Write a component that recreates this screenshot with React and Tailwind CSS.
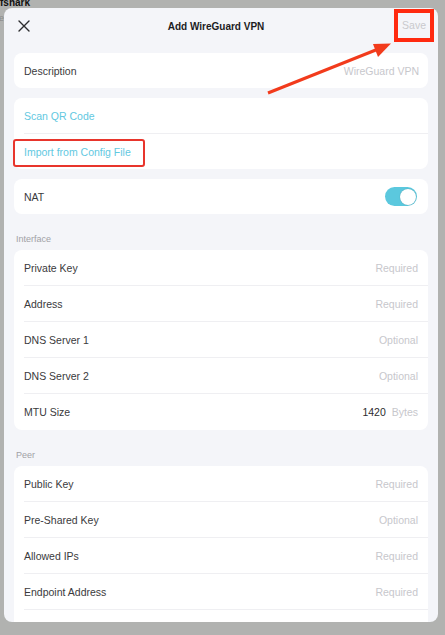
import React from "react";

const font = { fontFamily: '"Liberation Sans", Arial, sans-serif' };

function Row({ label, value, valueDark, last }) {
  return (
    <div
      className={`h-[36px] flex items-center justify-between pr-[10px] ${
        last ? "" : "border-b border-[#efeff2]"
      }`}
    >
      <span className="mt-[2px] text-[10.5px] text-[#3a3a3c]">{label}</span>
      <span className="mt-[2px] text-[10.5px] text-[#c7c7cc] flex items-center gap-[6px]">
        {valueDark && <span className="text-[#2c2c2e]">{valueDark}</span>}
        {value}
      </span>
    </div>
  );
}

function Section({ title }) {
  return (
    <div className="pt-[20px] pb-[5px] pl-[2px] text-[9px] leading-[11px] text-[#a1a1a6]">
      {title}
    </div>
  );
}

export default function App() {
  return (
    <div
      className="relative w-[445px] h-[635px] bg-[#b1b2b0] overflow-hidden pt-[8px] pl-[4px]"
      style={font}
    >
      <div className="absolute left-0 top-[-3px] text-[10px] font-bold text-[#111] leading-[11px]">
        fshark
      </div>
      <div className="absolute left-[-1px] top-[13px] text-[9px] text-[#8a8a8a] leading-[10px]">
        e
      </div>

      <div className="relative w-[434px] h-[614px] rounded-[8px] bg-[#f4f5f9] overflow-hidden flex flex-col">
        <div className="h-[36px] shrink-0 flex items-center justify-between pl-[14px] pr-[12px]">
          <svg width="12" height="12" viewBox="0 0 12 12">
            <path d="M1 1 L11 11 M11 1 L1 11" stroke="#2c2c2e" strokeWidth="1.4" strokeLinecap="round" />
          </svg>
          <span className="text-[10px] font-bold text-[#1c1c1e]">Add WireGuard VPN</span>
          <span className="text-[10.5px] text-[#c9c9cd]">Save</span>
        </div>

        <div className="mt-[9px] px-[10px] flex flex-col">
          <div className="bg-white rounded-[8px] h-[35px] flex items-center justify-between pl-[10px] pr-[9px]">
            <span className="mt-[2px] text-[10.5px] text-[#3a3a3c]">Description</span>
            <span className="mt-[2px] text-[10.5px] text-[#c7c7cc]">WireGuard VPN</span>
          </div>

          <div className="mt-[10px] bg-white rounded-[8px] pl-[10px]">
            <div className="h-[36px] flex items-center border-b border-[#efeff2] text-[10.5px] text-[#62c8df]">
              <span className="mt-[2px]">Scan QR Code</span>
            </div>
            <div className="h-[35px] flex items-center text-[10.5px] text-[#62c8df]">
              <span className="mt-[2px]">Import from Config File</span>
            </div>
          </div>

          <div className="mt-[10px] bg-white rounded-[8px] h-[35px] flex items-center justify-between pl-[10px] pr-[11px]">
            <span className="mt-[2px] text-[10.5px] text-[#3a3a3c]">NAT</span>
            <div className="w-[32px] h-[19px] rounded-full bg-[#5bc8de] flex items-center justify-end pr-[1.5px]">
              <div className="w-[16px] h-[16px] rounded-full bg-white shadow-[0_0_1px_rgba(0,0,0,0.3)]" />
            </div>
          </div>

          <Section title="Interface" />
          <div className="bg-white rounded-[8px] pl-[10px]">
            <Row label="Private Key" value="Required" />
            <Row label="Address" value="Required" />
            <Row label="DNS Server 1" value="Optional" />
            <Row label="DNS Server 2" value="Optional" />
            <Row label="MTU Size" valueDark="1420" value="Bytes" last />
          </div>

          <Section title="Peer" />
          <div className="bg-white rounded-[8px] pl-[10px]">
            <Row label="Public Key" value="Required" />
            <Row label="Pre-Shared Key" value="Optional" />
            <Row label="Allowed IPs" value="Required" />
            <Row label="Endpoint Address" value="Required" />
            <div className="h-[36px] flex items-start justify-between pr-[10px] pt-[10px]">
              <span className="text-[10.5px] text-[#3a3a3c]">Endpoint Port</span>
              <span className="text-[10.5px] text-[#c7c7cc]">Required</span>
            </div>
          </div>
        </div>
      </div>

      {/* annotations */}
      <div className="absolute left-[394px] top-[9px] w-[40px] h-[33px] border-[4px] border-[#ff2a10]" />
      <div className="absolute left-[13px] top-[139px] w-[132px] h-[28px] border-[2px] border-[#e8352c] rounded-[3px]" />
      <svg className="absolute left-0 top-0" width="445" height="635" viewBox="0 0 445 635">
        <line x1="268" y1="93" x2="377" y2="49.5" stroke="#f23b1c" strokeWidth="3" />
        <polygon points="391,43.5 373,44 378,57" fill="#f23b1c" />
      </svg>
    </div>
  );
}
